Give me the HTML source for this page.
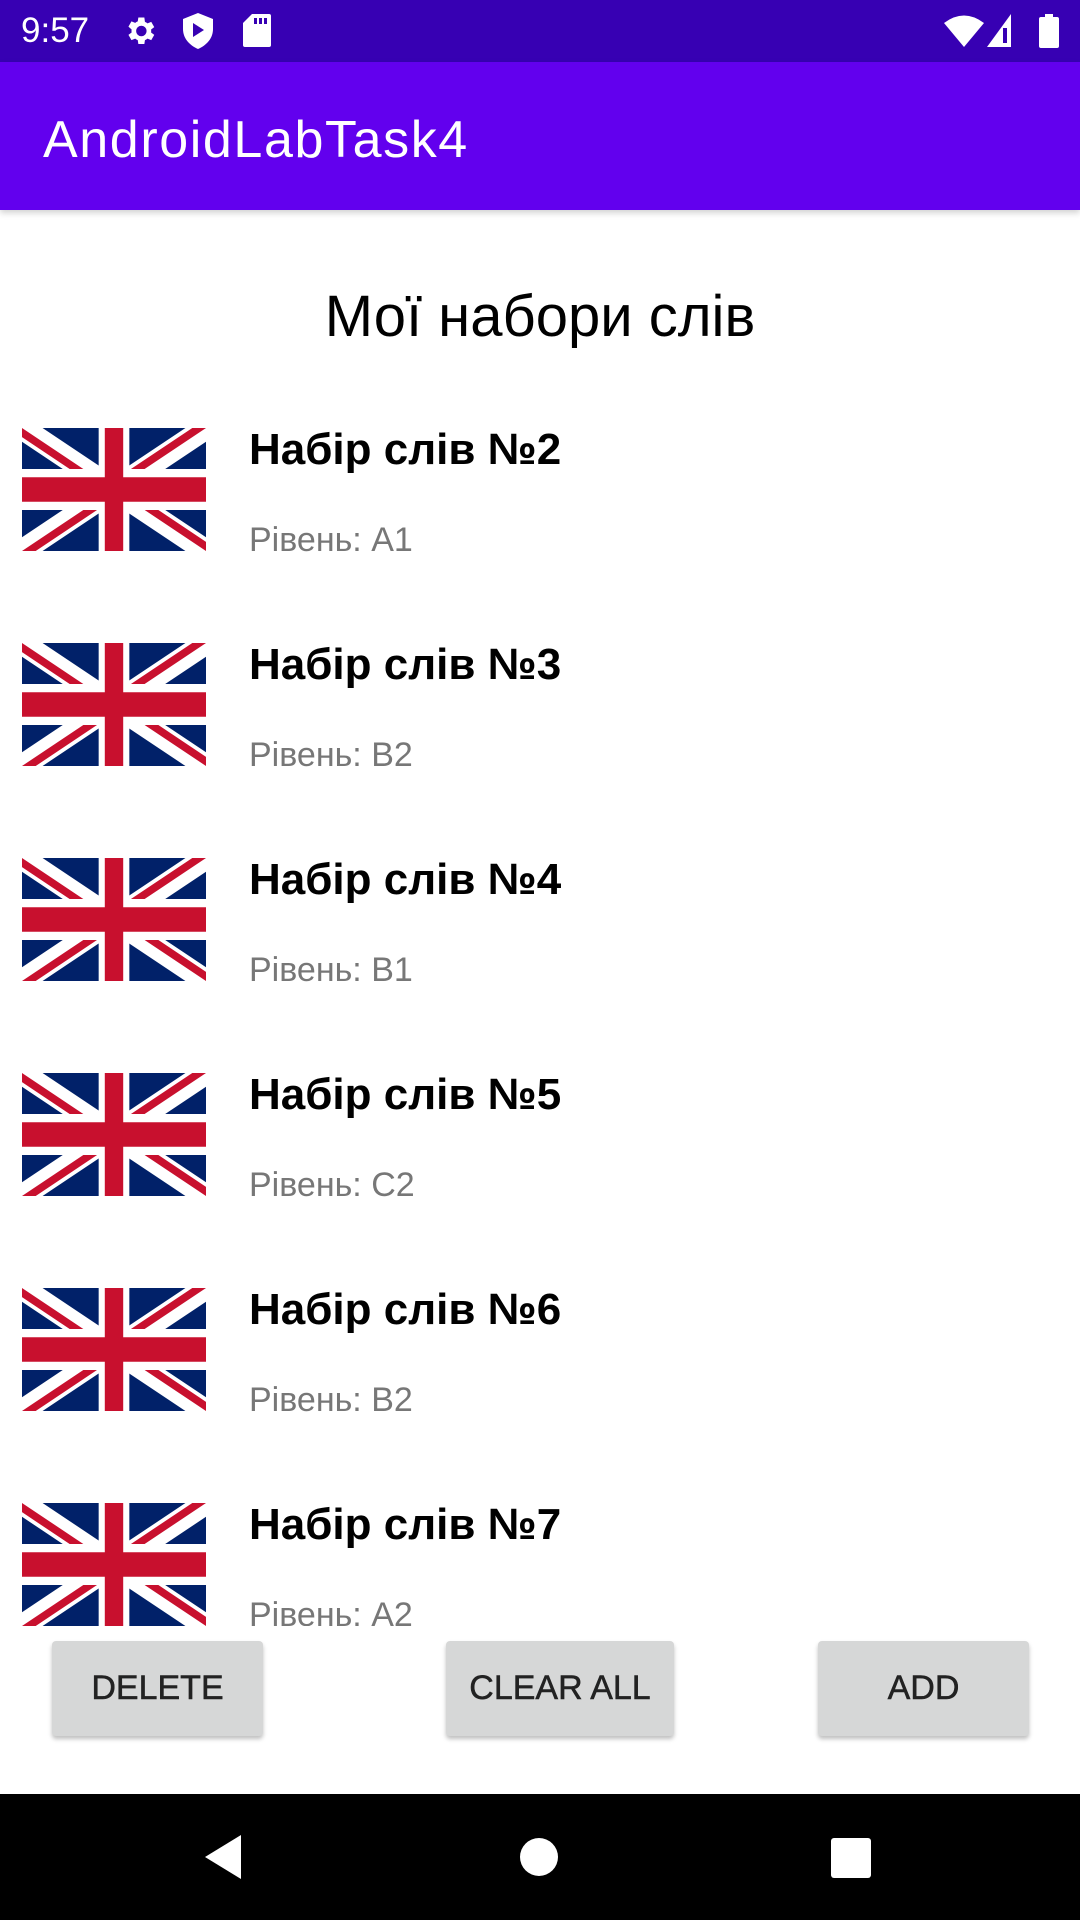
<!DOCTYPE html>
<html><head><meta charset="utf-8"><style>
*{margin:0;padding:0;box-sizing:border-box}
body{width:1080px;height:1920px;position:relative;background:#fff;font-family:"Liberation Sans",sans-serif;overflow:hidden}
.abs{position:absolute}
.status{left:0;top:0;width:1080px;height:62px;background:#3700b3}
.bar{left:0;top:62px;width:1080px;height:148px;background:#6200ee;box-shadow:0 3px 6px rgba(0,0,0,.18)}
.title{left:43px;top:107px;color:#fff;font-size:52px;line-height:66px;letter-spacing:1.6px}
.h{left:0;width:1080px;top:280px;text-align:center;font-size:58px;line-height:74px;color:#000}
.flag{left:22px;width:184px;height:123px}
.it{left:249px;font-size:44px;font-weight:bold;color:#000;line-height:60px}
.sub{left:249px;font-size:34px;color:#777;line-height:44px}
.btn{top:1641px;height:95px;background:#d6d7d7;border-radius:4px;box-shadow:0 3px 4px rgba(0,0,0,.25);font-size:34px;color:#222;text-align:center;line-height:95px;letter-spacing:0px;-webkit-text-stroke:0.5px #222}
.nav{left:0;top:1794px;width:1080px;height:126px;background:#000}
</style></head><body>
<div class="abs status"></div>
<div class="abs" style="left:21px;top:8px;color:#fff;font-size:35px;line-height:46px">9:57</div>
<svg class="abs" style="left:122px;top:12px" width="36" height="38" viewBox="0 0 24 24"><path fill="#fff" d="M19.4 13a7.5 7.5 0 0 0 0-2l2.1-1.6-2-3.5-2.5 1a7 7 0 0 0-1.7-1L14.9 3h-4l-.4 2.6a7 7 0 0 0-1.7 1l-2.5-1-2 3.5L6.4 11a7.5 7.5 0 0 0 0 2l-2.1 1.6 2 3.5 2.5-1a7 7 0 0 0 1.7 1l.4 2.6h4l.4-2.6a7 7 0 0 0 1.7-1l2.5 1 2-3.5zM12.9 15.5a3.5 3.5 0 1 1 0-7 3.5 3.5 0 0 1 0 7z"/></svg>
<svg class="abs" style="left:182px;top:13px" width="32" height="36" viewBox="0 0 32 36"><path fill="#fff" d="M16 0L31 6v10c0 9-6 16-15 20C7 32 1 25 1 16V6z"/><path fill="#3700b3" d="M11 10l11 7-11 7z"/></svg>
<svg class="abs" style="left:243px;top:14px" width="28" height="33" viewBox="0 0 28 33"><path fill="#fff" d="M9 0h17a2 2 0 0 1 2 2v29a2 2 0 0 1-2 2H2a2 2 0 0 1-2-2V9z"/><path fill="#3700b3" d="M11 4h3v6h-3zM16 4h3v6h-3zM21 4h3v6h-3z"/></svg>
<svg class="abs" style="left:944px;top:14px" width="40" height="33" viewBox="0 0 40 33"><path fill="#fff" d="M0 9Q20-6 40 9L20 33z"/></svg>
<svg class="abs" style="left:987px;top:14px" width="24" height="33" viewBox="0 0 24 33"><path fill="#fff" d="M24 0V33H0z"/><path fill="#3700b3" d="M16 14h4v15h-4z"/></svg>
<svg class="abs" style="left:1039px;top:14px" width="20" height="34" viewBox="0 0 20 34"><path fill="#fff" d="M6 0h8v3h4a2 2 0 0 1 2 2v27a2 2 0 0 1-2 2H2a2 2 0 0 1-2-2V5a2 2 0 0 1 2-2h4z"/></svg>
<div class="abs bar"></div>
<div class="abs title">AndroidLabTask4</div>
<div class="abs h">Мої набори слів</div>

<div style="position:absolute;left:0;top:0;width:1080px;height:1626px;overflow:hidden">
<svg width="0" height="0" style="position:absolute"><defs><g id="uk">
<clipPath id="s"><path d="M0,0 v30 h60 v-30 z"/></clipPath>
<clipPath id="t"><path d="M30,15 h30 v15 z v15 h-30 z h-30 v-15 z v-15 h30 z"/></clipPath>
<g clip-path="url(#s)">
<path d="M0,0 v30 h60 v-30 z" fill="#012169"/>
<path d="M0,0 L60,30 M60,0 L0,30" stroke="#fff" stroke-width="6"/>
<path d="M0,0 L60,30 M60,0 L0,30" clip-path="url(#t)" stroke="#C8102E" stroke-width="4"/>
<path d="M30,0 v30 M0,15 h60" stroke="#fff" stroke-width="10"/>
<path d="M30,0 v30 M0,15 h60" stroke="#C8102E" stroke-width="6"/>
</g></g></defs></svg>

<svg class="abs flag" style="top:428px" viewBox="0 0 60 30" preserveAspectRatio="none"><use href="#uk"/></svg>
<div class="abs it" style="top:420px">Набір слів №2</div>
<div class="abs sub" style="top:518px">Рівень: A1</div>

<svg class="abs flag" style="top:643px" viewBox="0 0 60 30" preserveAspectRatio="none"><use href="#uk"/></svg>
<div class="abs it" style="top:635px">Набір слів №3</div>
<div class="abs sub" style="top:733px">Рівень: B2</div>

<svg class="abs flag" style="top:858px" viewBox="0 0 60 30" preserveAspectRatio="none"><use href="#uk"/></svg>
<div class="abs it" style="top:850px">Набір слів №4</div>
<div class="abs sub" style="top:948px">Рівень: B1</div>

<svg class="abs flag" style="top:1073px" viewBox="0 0 60 30" preserveAspectRatio="none"><use href="#uk"/></svg>
<div class="abs it" style="top:1065px">Набір слів №5</div>
<div class="abs sub" style="top:1163px">Рівень: C2</div>

<svg class="abs flag" style="top:1288px" viewBox="0 0 60 30" preserveAspectRatio="none"><use href="#uk"/></svg>
<div class="abs it" style="top:1280px">Набір слів №6</div>
<div class="abs sub" style="top:1378px">Рівень: B2</div>

<svg class="abs flag" style="top:1503px" viewBox="0 0 60 30" preserveAspectRatio="none"><use href="#uk"/></svg>
<div class="abs it" style="top:1495px">Набір слів №7</div>
<div class="abs sub" style="top:1593px">Рівень: A2</div>
</div>

<div class="abs btn" style="left:52px;width:211px">DELETE</div>
<div class="abs btn" style="left:446px;width:228px">CLEAR ALL</div>
<div class="abs btn" style="left:818px;width:211px">ADD</div>

<div class="abs nav"></div>
<svg class="abs" style="left:205px;top:1835px" width="40" height="44" viewBox="0 0 40 44"><path fill="#fff" d="M36 0V44L0 22z"/></svg>
<div class="abs" style="left:520px;top:1838px;width:38px;height:38px;border-radius:50%;background:#fff"></div>
<div class="abs" style="left:831px;top:1838px;width:40px;height:40px;border-radius:3px;background:#fff"></div>
</body></html>
